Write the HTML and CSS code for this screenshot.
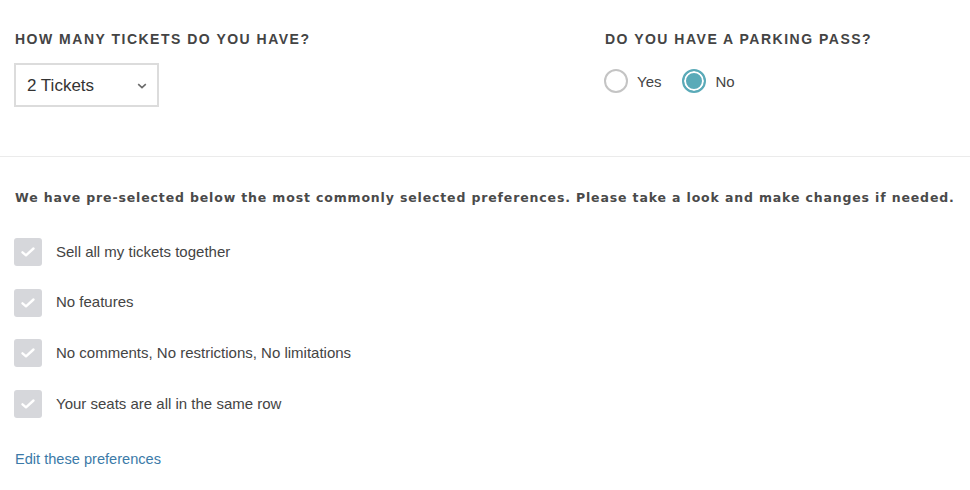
FILE: index.html
```html
<!DOCTYPE html>
<html>
<head>
<meta charset="utf-8">
<link rel="stylesheet" href="styles.css">
</head>
<body>
<div class="page">
  <div class="top">
    <div class="col col-tickets">
      <h2 class="heading">HOW MANY TICKETS DO YOU HAVE?</h2>
      <div class="select">
        <span class="select-value">2 Tickets</span>
        <svg class="chev" width="10" height="6" viewBox="0 0 10 6"><path d="M1.2 1.2 L5 4.6 L8.8 1.2" fill="none" stroke="#6a6a6a" stroke-width="1.6"/></svg>
      </div>
    </div>
    <div class="col col-parking">
      <h2 class="heading">DO YOU HAVE A PARKING PASS?</h2>
      <div class="radios">
        <label class="radio"><span class="radio-dot"></span><span class="radio-label">Yes</span></label>
        <label class="radio radio-on"><span class="radio-dot"></span><span class="radio-label">No</span></label>
      </div>
    </div>
  </div>
  <div class="prefs">
    <p class="intro">We have pre-selected below the most commonly selected preferences. Please take a look and make changes if needed.</p>
    <ul class="checks">
      <li class="check"><span class="box"><svg width="16" height="12" viewBox="0 0 16 12"><path d="M2.5 6.3 L6 9.3 L13.5 2.5" fill="none" stroke="#fff" stroke-width="2.4" stroke-linecap="round" stroke-linejoin="round"/></svg></span><span class="check-label">Sell all my tickets together</span></li>
      <li class="check"><span class="box"><svg width="16" height="12" viewBox="0 0 16 12"><path d="M2.5 6.3 L6 9.3 L13.5 2.5" fill="none" stroke="#fff" stroke-width="2.4" stroke-linecap="round" stroke-linejoin="round"/></svg></span><span class="check-label">No features</span></li>
      <li class="check"><span class="box"><svg width="16" height="12" viewBox="0 0 16 12"><path d="M2.5 6.3 L6 9.3 L13.5 2.5" fill="none" stroke="#fff" stroke-width="2.4" stroke-linecap="round" stroke-linejoin="round"/></svg></span><span class="check-label">No comments, No restrictions, No limitations</span></li>
      <li class="check"><span class="box"><svg width="16" height="12" viewBox="0 0 16 12"><path d="M2.5 6.3 L6 9.3 L13.5 2.5" fill="none" stroke="#fff" stroke-width="2.4" stroke-linecap="round" stroke-linejoin="round"/></svg></span><span class="check-label">Your seats are all in the same row</span></li>
    </ul>
    <a class="edit" href="#">Edit these preferences</a>
  </div>
</div>
</body>
</html>
```
FILE: styles.css
```css
* { box-sizing: border-box; }
html, body { margin: 0; padding: 0; background: #fff; }
body { font-family: "Liberation Sans", Arial, sans-serif; color: #444; }
.page { width: 970px; height: 490px; overflow: hidden; }
.top { display: flex; padding: 32px 0 0 15px; height: 157px; border-bottom: 1px solid #ebebeb; }
.col-tickets { width: 590px; }
.heading { margin: 0; font-family: "Liberation Sans", Arial, sans-serif; font-weight: bold; font-size: 14px; letter-spacing: 1.5px; color: #444; line-height: 14px; }
.select { margin: 17px 0 0 -1px; width: 145px; height: 44px; border: 2px solid #dcdcdc; display: flex; align-items: center; justify-content: space-between; padding: 0 10px 0 11px; }
.select-value { font-size: 17px; color: #333; margin-top: 2px; }
.chev { margin-top: 2px; }
.radios { display: flex; gap: 22px; margin-top: 23px; }
.radio { display: flex; align-items: center; gap: 9px; }
.radio-dot { width: 24px; height: 24px; border-radius: 50%; border: 2px solid #c4c4c4; margin-left: -1px; }
.radio-on .radio-dot { border: 2px solid #5aaab8; background: #5aaab8; box-shadow: inset 0 0 0 2px #fff; }
.radio-label { font-size: 15px; color: #444; }
.prefs { padding: 34px 0 0 15px; }
.intro { margin: 0; font-family: "DejaVu Sans", sans-serif; font-weight: bold; font-size: 12.5px; letter-spacing: 0.85px; color: #4a4a4a; line-height: 14px; white-space: nowrap; }
.checks { list-style: none; margin: 33px 0 0 0; padding: 0; display: flex; flex-direction: column; gap: 22.7px; }
.check { display: flex; align-items: center; gap: 14px; height: 28px; }
.box { width: 28px; height: 28px; margin-left: -1px; background: #d6d7db; border-radius: 3px; display: flex; align-items: center; justify-content: center; }
.check-label { font-size: 15px; color: #444; margin-top: -2px; }
.edit { display: inline-block; margin-top: 33px; font-size: 14.6px; color: #3b7aa8; text-decoration: none; }
```
